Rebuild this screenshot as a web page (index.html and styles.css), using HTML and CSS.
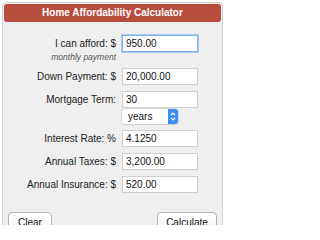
FILE: index.html
```html
<!DOCTYPE html>
<html>
<head>
<meta charset="utf-8">
<link rel="stylesheet" href="styles.css">
</head>
<body>
<div class="panel">
  <div class="header">Home Affordability Calculator</div>
  <div class="form">
    <div class="group">
      <div class="row">
        <label class="label">I can afford: $</label>
        <div class="input focus">950.00</div>
      </div>
      <div class="note">monthly payment</div>
    </div>
    <div class="row">
      <label class="label">Down Payment: $</label>
      <div class="input">20,000.00</div>
    </div>
    <div class="group tight">
      <div class="row">
        <label class="label">Mortgage Term:</label>
        <div class="input">30</div>
      </div>
      <div class="row">
        <span class="label"></span>
        <div class="select">
          <span class="select-text">years</span>
          <span class="stepper">
            <svg width="10" height="15" viewBox="0 0 10 15">
              <path d="M3 6 L5 4 L7 6" fill="none" stroke="#fff" stroke-width="1.2"/>
              <path d="M3 9 L5 11 L7 9" fill="none" stroke="#fff" stroke-width="1.2"/>
            </svg>
          </span>
        </div>
      </div>
    </div>
    <div class="row">
      <label class="label">Interest Rate: %</label>
      <div class="input">4.1250</div>
    </div>
    <div class="row">
      <label class="label">Annual Taxes: $</label>
      <div class="input">3,200.00</div>
    </div>
    <div class="row">
      <label class="label">Annual Insurance: $</label>
      <div class="input">520.00</div>
    </div>
  </div>
  <div class="buttons">
    <button class="btn clear">Clear</button>
    <button class="btn calc">Calculate</button>
  </div>
</div>
</body>
</html>
```
FILE: styles.css
```css
html, body {
  margin: 0;
  padding: 0;
  background: #ffffff;
  overflow: hidden;
}
body {
  font-family: "Liberation Sans", Arial, sans-serif;
  font-size: 10px;
  color: #222;
  width: 225px;
  height: 225px;
}
.panel {
  margin: 2px 2px 0 2px;
  border: 1px solid #d2d2d2;
  border-radius: 4px;
  background: #efefef;
  padding: 1px;
  height: 260px;
}
.header {
  height: 18px;
  line-height: 18px;
  background: #b84c3d;
  border-radius: 3px;
  color: #fff;
  font-weight: bold;
  font-size: 10px;
  text-align: center;
}
.form {
  display: flex;
  flex-direction: column;
  gap: 6px;
  margin-top: 13px;
}
.group {
  display: flex;
  flex-direction: column;
}
.group.tight {
  gap: 1px;
}
.row {
  display: flex;
  align-items: center;
  gap: 6px;
}
.label {
  width: 112px;
  text-align: right;
  flex: none;
  color: #222;
}
.input {
  box-sizing: border-box;
  width: 76px;
  height: 17px;
  line-height: 15px;
  background: #fff;
  border: 1px solid #cfcfcf;
  padding-left: 3px;
  color: #111;
}
.input.focus {
  border-color: #7fb0ee;
  box-shadow: 0 0 0 1px #a9cbf4;
}
.note {
  height: 10px;
  line-height: 10px;
  width: 112px;
  text-align: right;
  font-style: italic;
  font-size: 8.5px;
  color: #555;
}
.select {
  box-sizing: border-box;
  width: 56px;
  height: 15px;
  background: #fff;
  border-radius: 3px;
  box-shadow: 0 0 0 0.5px #c4c4c4, 0 1px 1px rgba(0,0,0,0.12);
  display: flex;
  align-items: center;
  justify-content: space-between;
}
.select-text {
  padding-left: 6px;
  color: #111;
}
.stepper {
  width: 10px;
  height: 15px;
  background: #3d8ef2;
  border-radius: 0 3px 3px 0;
  display: flex;
}
.buttons {
  display: flex;
  justify-content: space-between;
  padding: 0 4px 0 4px;
  margin-top: 19px;
}
.btn {
  font-family: "Liberation Sans", Arial, sans-serif;
  font-size: 10px;
  height: 20px;
  background: linear-gradient(#ffffff, #f4f4f4);
  border: 1px solid #b4b4b4;
  border-radius: 4px;
  color: #111;
  padding: 0;
}
.clear {
  width: 44px;
}
.calc {
  width: 60px;
}
```
